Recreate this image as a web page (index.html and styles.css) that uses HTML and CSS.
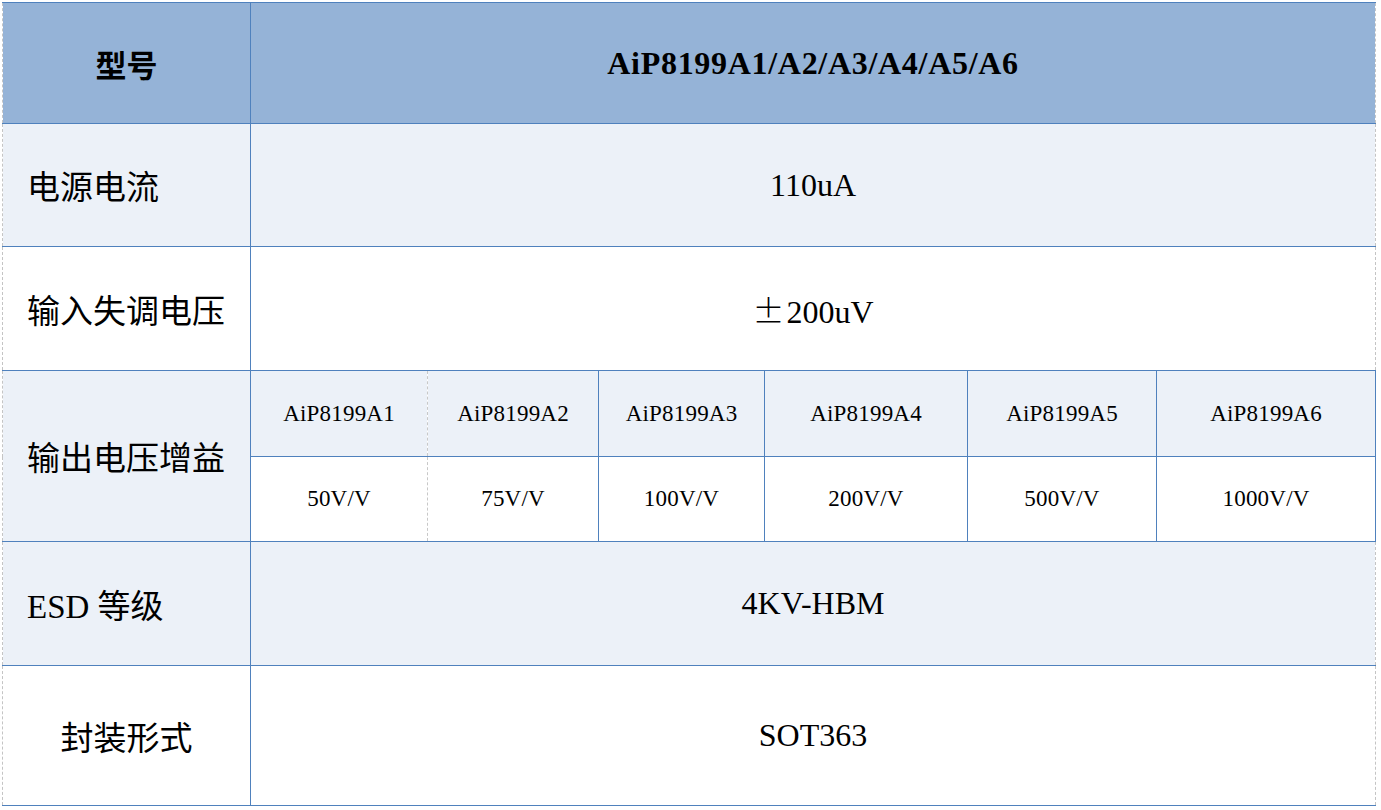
FILE: index.html
```html
<!DOCTYPE html>
<html lang="zh-CN">
<head>
<meta charset="utf-8">
<title>AiP8199 规格</title>
<link rel="stylesheet" href="styles.css">
</head>
<body>
<table class="spec">
  <colgroup>
    <col class="c0"><col class="c1"><col class="c2"><col class="c3"><col class="c4"><col class="c5"><col class="c6">
  </colgroup>
  <tr class="row-head">
    <th class="label centered">型号</th>
    <th class="value edge" colspan="6">AiP8199A1/A2/A3/A4/A5/A6</th>
  </tr>
  <tr class="row-2 tint">
    <td class="label">电源电流</td>
    <td class="value edge" colspan="6">110uA</td>
  </tr>
  <tr class="row-3">
    <td class="label">输入失调电压</td>
    <td class="value edge" colspan="6"><span class="pm">±</span>200uV</td>
  </tr>
  <tr class="row-4a">
    <td class="label tint" rowspan="2">输出电压增益</td>
    <td class="sub tint soft-right">AiP8199A1</td>
    <td class="sub tint soft-left">AiP8199A2</td>
    <td class="sub tint">AiP8199A3</td>
    <td class="sub tint">AiP8199A4</td>
    <td class="sub tint">AiP8199A5</td>
    <td class="sub tint">AiP8199A6</td>
  </tr>
  <tr class="row-4b">
    <td class="sub soft-right">50V/V</td>
    <td class="sub soft-left">75V/V</td>
    <td class="sub">100V/V</td>
    <td class="sub">200V/V</td>
    <td class="sub">500V/V</td>
    <td class="sub">1000V/V</td>
  </tr>
  <tr class="row-5 tint">
    <td class="label">ESD 等级</td>
    <td class="value edge" colspan="6">4KV-HBM</td>
  </tr>
  <tr class="row-6">
    <td class="label centered">封装形式</td>
    <td class="value edge" colspan="6">SOT363</td>
  </tr>
</table>
</body>
</html>
```

FILE: styles.css
```css
html, body {
  margin: 0;
  padding: 0;
  background: #ffffff;
}

body {
  padding: 2px 0 0 2px;
  font-family: "Liberation Serif", "Noto Sans CJK SC", serif;
  color: #000000;
}

.spec {
  border-collapse: collapse;
  table-layout: fixed;
  width: 1374px;
}

.c0 { width: 248px; }
.c1 { width: 177px; }
.c2 { width: 171px; }
.c3 { width: 166px; }
.c4 { width: 203px; }
.c5 { width: 189px; }
.c6 { width: 219px; }

.spec th,
.spec td {
  border: 1px solid #4f81bd;
  padding: 0;
  text-align: center;
  vertical-align: middle;
  font-weight: normal;
  overflow: hidden;
  white-space: nowrap;
}

.spec .label {
  border-left: 1px dashed #c4c4c4;
  font-size: 33px;
  text-align: left;
  padding-left: 24px;
}

.spec .label.centered {
  text-align: center;
  padding-left: 0;
}

.spec .value {
  font-size: 32px;
}

.pm {
  font-family: "Noto Sans CJK SC", sans-serif;
  font-weight: 300;
  margin-right: 2px;
}

.spec .edge {
  border-right: 1px dashed #c4c4c4;
}

.spec .sub {
  font-size: 23px;
  letter-spacing: 0.2px;
}

.spec .soft-right {
  border-right: 1px dashed #c8c8c8;
}

.spec .soft-left {
  border-left: 1px dashed #c8c8c8;
}

.row-head th {
  background: #95b3d7;
  font-weight: bold;
}

.row-head .value {
  letter-spacing: 0.7px;
}

.row-head .label {
  font-size: 31px;
}

.tint td,
td.tint {
  background: #ecf1f8;
}

.row-head { height: 121px; }
.row-2 { height: 123px; }
.row-3 { height: 124px; }
.row-4a { height: 86px; }
.row-4b { height: 85px; }
.row-5 { height: 124px; }
.row-6 { height: 140px; }
```
